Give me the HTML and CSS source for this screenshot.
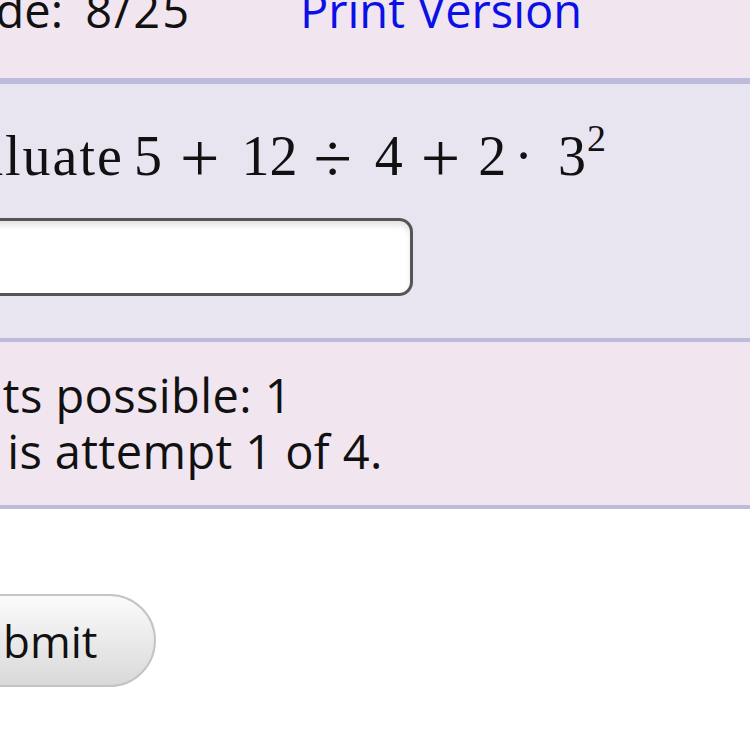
FILE: index.html
```html
<!DOCTYPE html>
<html>
<head>
<meta charset="utf-8">
<link rel="stylesheet" href="styles.css">
</head>
<body>
<div class="band top">
  <div class="header">
    <span class="grade">Grade: <span class="score">8/25</span></span>
    <a class="print" href="#">Print Version</a>
  </div>
</div>
<div class="band question">
  <div class="math"><span class="word">Evaluate</span><span class="n n5">5</span><span class="op plus1">+</span><span class="n n12">12</span><span class="op div">÷</span><span class="n n4">4</span><span class="op plus2">+</span><span class="n n2">2</span><span class="op dot">·</span><span class="n n3">3</span><sup class="sq">2</sup></div>
  <div class="answer"><input class="answer-box" type="text"></div>
</div>
<div class="band info">
  <div class="line l1">Points possible: 1</div>
  <div class="line l2">This is attempt 1 of 4.</div>
</div>
<div class="actions">
  <button class="submit" type="button">Submit</button>
</div>
</body>
</html>
```
FILE: styles.css
```css
html, body {
  margin: 0;
  padding: 0;
  background: #ffffff;
  overflow: hidden;
}
body {
  font-family: "Open Sans", "Noto Sans", sans-serif;
  font-size: 47px;
  color: #111;
  width: 750px;
  height: 750px;
}
.band.top {
  background: #f1e6f0;
  height: 78px;
  border-bottom: 6px solid #bdbadb;
  overflow: hidden;
}
.header {
  display: flex;
  line-height: 56px;
  margin-top: -18px;
  margin-left: -84px;
}
.grade {
  width: 384px;
}
.score {
  margin-left: 10px;
  letter-spacing: 2px;
}
.print {
  color: #0a10e6;
  text-decoration: none;
}
.band.question {
  background: #e8e5f1;
  height: 254px;
  border-bottom: 4px solid #bdbadb;
  display: flex;
  flex-direction: column;
}
.math {
  font-family: "Liberation Serif", "Times New Roman", serif;
  font-size: 56px;
  line-height: 60px;
  margin-top: 42px;
  margin-left: -88px;
  white-space: nowrap;
  color: #111;
}
.math .word {
  letter-spacing: 2px;
}
.math .n5 { margin-left: 10px; }
.math .op {
  font-size: 70px;
  line-height: 0;
  display: inline-block;
  vertical-align: -7px;
}
.math .plus1 { margin-left: 18px; }
.math .n12 { margin-left: 22px; }
.math .div { margin-left: 16px; }
.math .n4 { margin-left: 23px; }
.math .plus2 { margin-left: 18px; }
.math .n2 { margin-left: 18px; }
.math .op.dot {
  font-size: 56px;
  vertical-align: 0;
  margin-left: 8px;
}
.math .n3 { margin-left: 25px; }
.math .sq {
  font-size: 38px;
  line-height: 0;
  vertical-align: 24px;
  margin-left: 1px;
}
.answer {
  margin-top: 32px;
}
.answer-box {
  display: block;
  width: 500px;
  height: 78px;
  box-sizing: border-box;
  border: 3px solid #555;
  border-radius: 14px;
  background: #fff;
  box-shadow: inset 0 5px 5px rgba(0,0,0,0.10);
  margin-left: -87px;
}
.band.info {
  background: #f1e6f0;
  height: 167px;
  border-bottom: 4px solid #bdbadb;
  line-height: 56px;
  padding-top: 25px;
  box-sizing: border-box;
}
.line {
  letter-spacing: 0.4px;
}
.line.l1 { margin-left: -96px; }
.line.l2 { margin-left: -96px; }
.actions {
  padding-top: 85px;
}
.submit {
  font-family: "Open Sans", "Noto Sans", sans-serif;
  font-size: 44px;
  height: 93px;
  padding: 0 56px 0 100px;
  margin-left: -150px;
  border: 2px solid #c4c4c4;
  border-radius: 47px;
  background: linear-gradient(#fbfbfb, #d9d9d9);
  color: #111;
}
```
